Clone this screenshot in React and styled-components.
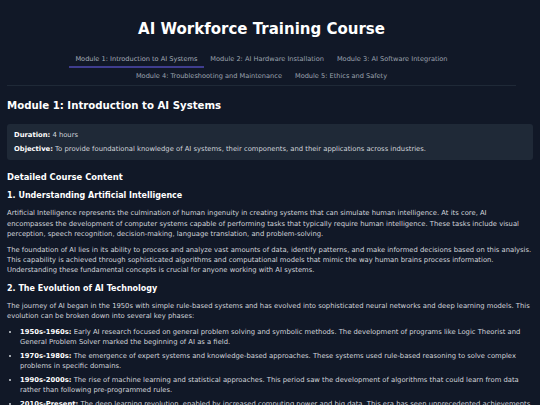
import styled, { createGlobalStyle } from "styled-components";

const GlobalStyle = createGlobalStyle`
  html, body {
    margin: 0;
    padding: 0;
    background: #111827;
  }
  body {
    font-family: "DejaVu Sans", "Liberation Sans", sans-serif;
    color: #d1d5db;
    -webkit-font-smoothing: antialiased;
  }
`;

const modules = [
  "Module 1: Introduction to AI Systems",
  "Module 2: AI Hardware Installation",
  "Module 3: AI Software Integration",
  "Module 4: Troubleshooting and Maintenance",
  "Module 5: Ethics and Safety",
];

const phases = [
  {
    label: "1950s-1960s:",
    text: "Early AI research focused on general problem solving and symbolic methods. The development of programs like Logic Theorist and General Problem Solver marked the beginning of AI as a field.",
  },
  {
    label: "1970s-1980s:",
    text: "The emergence of expert systems and knowledge-based approaches. These systems used rule-based reasoning to solve complex problems in specific domains.",
  },
  {
    label: "1990s-2000s:",
    text: "The rise of machine learning and statistical approaches. This period saw the development of algorithms that could learn from data rather than following pre-programmed rules.",
  },
  {
    label: "2010s-Present:",
    text: "The deep learning revolution, enabled by increased computing power and big data. This era has seen unprecedented achievements in image recognition, natural language processing, and game playing.",
  },
];

const App = () => {
  return (
    <>
      <GlobalStyle />
      <Page>
        <Header>
          <Title>AI Workforce Training Course</Title>
          <Tabs>
            {modules.map((m, i) => (
              <Tab key={m} $active={i === 0}>
                {m}
              </Tab>
            ))}
          </Tabs>
        </Header>

        <ModuleTitle>Module 1: Introduction to AI Systems</ModuleTitle>

        <InfoBox>
          <InfoLine>
            <b>Duration:</b> 4 hours
          </InfoLine>
          <InfoLine>
            <b>Objective:</b> To provide foundational knowledge of AI systems,
            their components, and their applications across industries.
          </InfoLine>
        </InfoBox>

        <SectionTitle>Detailed Course Content</SectionTitle>

        <SubTitle>1. Understanding Artificial Intelligence</SubTitle>
        <Para>
          Artificial Intelligence represents the culmination of human ingenuity
          in creating systems that can simulate human intelligence. At its core,
          AI encompasses the development of computer systems capable of
          performing tasks that typically require human intelligence. These
          tasks include visual perception, speech recognition, decision-making,
          language translation, and problem-solving.
        </Para>
        <Para>
          The foundation of AI lies in its ability to process and analyze vast
          amounts of data, identify patterns, and make informed decisions based
          on this analysis. This capability is achieved through sophisticated
          algorithms and computational models that mimic the way human brains
          process information. Understanding these fundamental concepts is
          crucial for anyone working with AI systems.
        </Para>

        <SubTitle>2. The Evolution of AI Technology</SubTitle>
        <Para>
          The journey of AI began in the 1950s with simple rule-based systems
          and has evolved into sophisticated neural networks and deep learning
          models. This evolution can be broken down into several key phases:
        </Para>
        <List>
          {phases.map((p) => (
            <Item key={p.label}>
              <b>{p.label}</b> {p.text}
            </Item>
          ))}
        </List>
      </Page>
    </>
  );
};

export default App;

const Page = styled.div`
  padding: 0 7px;
`;

const Header = styled.header`
  margin-right: 17px;
  padding-top: 17px;
  border-bottom: 1px solid #1f2937;
  text-align: center;
`;

const Title = styled.h1`
  margin: 0;
  font-size: 15px;
  line-height: 24px;
  font-weight: bold;
  color: #ffffff;
`;

const Tabs = styled.nav`
  display: flex;
  flex-wrap: wrap;
  justify-content: center;
  margin-top: 10px;
`;

const Tab = styled.div`
  padding: 4px 6.5px 3px;
  font-size: 6.6px;
  line-height: 8px;
  color: ${(p) => (p.$active ? "#a5acb8" : "#9ca3af")};
  border-bottom: 2px solid ${(p) => (p.$active ? "#3f3d8f" : "transparent")};
`;

const ModuleTitle = styled.h2`
  margin: 13px 0 0;
  font-size: 10.2px;
  line-height: 14px;
  color: #ffffff;
`;

const InfoBox = styled.div`
  margin-top: 11px;
  padding: 6px 7px;
  background: #1f2937;
  border-radius: 3px;
  display: flex;
  flex-direction: column;
  gap: 3.6px;
`;

const InfoLine = styled.p`
  margin: 0;
  font-size: 6.8px;
  line-height: 10.4px;
  color: #d1d5db;

  b {
    color: #ffffff;
  }
`;

const SectionTitle = styled.h3`
  margin: 11px 0 0;
  font-size: 8.4px;
  line-height: 12px;
  color: #ffffff;
`;

const SubTitle = styled.h4`
  margin: 7px 0 7px;
  font-size: 8px;
  line-height: 11px;
  color: #ffffff;
`;

const Para = styled.p`
  margin: 0 0 5.6px;
  font-size: 6.8px;
  line-height: 10.3px;
`;

const List = styled.ul`
  margin: 0;
  padding-left: 13px;
  font-size: 6.8px;
  line-height: 10.2px;

  b {
    color: #ffffff;
  }
`;

const Item = styled.li`
  margin-bottom: 3.7px;
`;
